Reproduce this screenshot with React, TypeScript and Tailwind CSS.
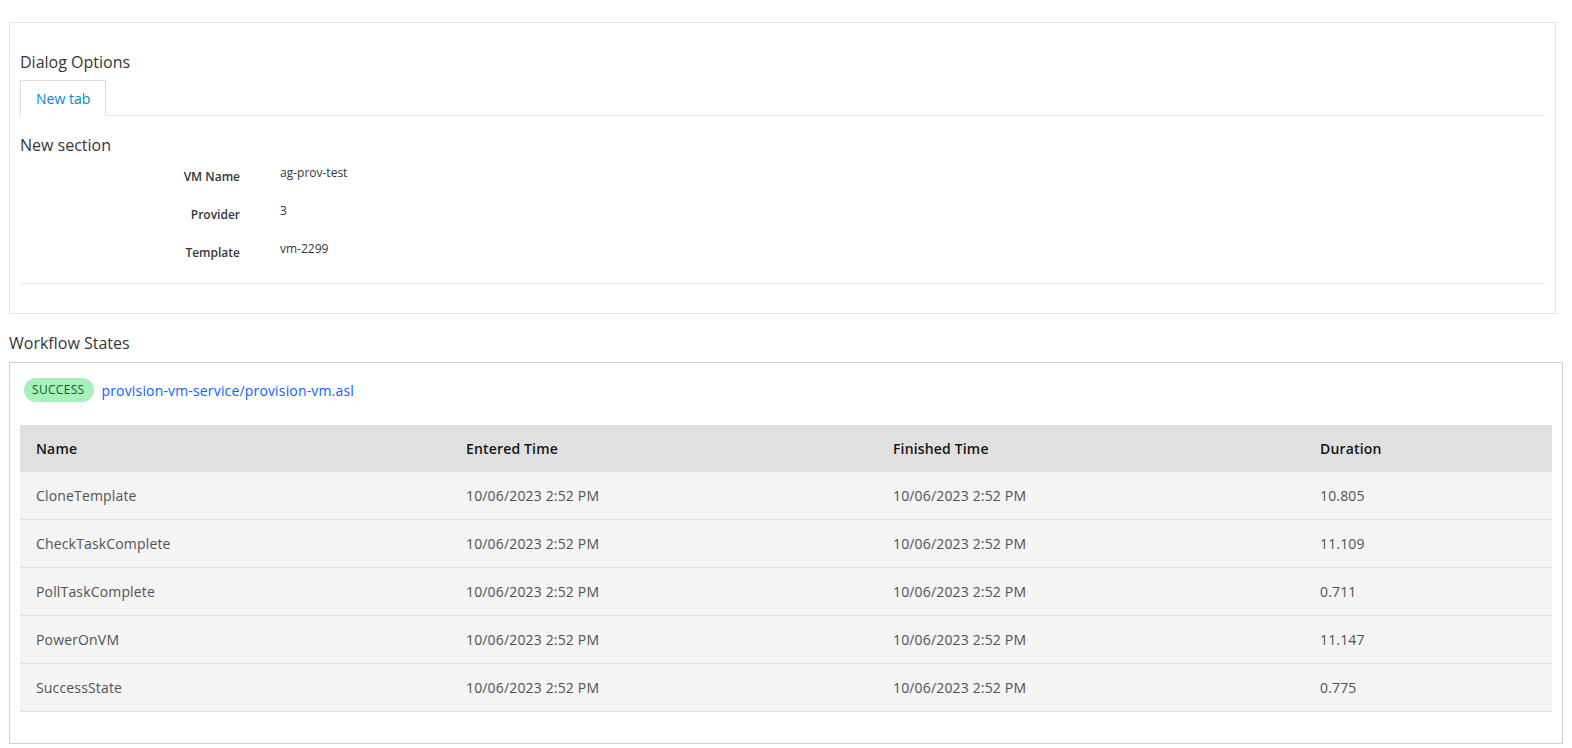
import React from "react";

const rows = [
  ["CloneTemplate", "10/06/2023 2:52 PM", "10/06/2023 2:52 PM", "10.805"],
  ["CheckTaskComplete", "10/06/2023 2:52 PM", "10/06/2023 2:52 PM", "11.109"],
  ["PollTaskComplete", "10/06/2023 2:52 PM", "10/06/2023 2:52 PM", "0.711"],
  ["PowerOnVM", "10/06/2023 2:52 PM", "10/06/2023 2:52 PM", "11.147"],
  ["SuccessState", "10/06/2023 2:52 PM", "10/06/2023 2:52 PM", "0.775"],
];

const fields = [
  ["VM Name", "ag-prov-test"],
  ["Provider", "3"],
  ["Template", "vm-2299"],
];

export default function App() {
  return (
    <div
      className="min-h-[748px] bg-white pt-[22px] pl-[9px] text-[#363636]"
      style={{ fontFamily: '"Open Sans", "Noto Sans", sans-serif' }}
    >
      <div className="w-[1547px] border border-[#e3e3e3] px-[10px] pt-[28px] pb-[29px]">
        <h2 className="text-[16px] leading-[22px] text-[#363636]">Dialog Options</h2>
        <div className="mt-[7px] flex border-b border-[#e6e6e6]">
          <div className="-mb-px flex h-[36px] items-center border border-b-white border-[#dddddd] bg-white px-[15px] text-[14px] text-[#0088ce]">
            New tab
          </div>
        </div>
        <h3 className="mt-[18px] text-[16px] leading-[22px] text-[#363636]">New section</h3>
        <div className="mt-[2px] flex flex-col">
          {fields.map(([label, value]) => (
            <div key={label} className="flex h-[38px] items-start">
              <div className="w-[220px] pt-[10px] text-right text-[12px] leading-[18px] font-semibold text-[#363636]">
                {label}
              </div>
              <div className="ml-[40px] pt-[6px] text-[12px] leading-[18px] text-[#363636]">{value}</div>
            </div>
          ))}
        </div>
        <div className="mt-[11px] border-t border-[#ececec]" />
      </div>

      <h2 className="mt-[18px] text-[16px] leading-[22px] text-[#363636]">Workflow States</h2>

      <div className="mt-[8px] w-[1554px] border border-[#d0d0d0] px-[10px] pt-[15px] pb-[31px]">
        <div className="flex items-center gap-[8px] pl-[4px]">
          <span className="flex h-[24px] items-center rounded-full bg-[#a7f0ba] pl-[8px] pr-[9px] text-[12px] tracking-[0.32px] text-[#0e6027]">
            SUCCESS
          </span>
          <a className="text-[14px] tracking-[0.16px] text-[#0f62fe]" href="#">
            provision-vm-service/provision-vm.asl
          </a>
        </div>
        <div className="mt-[23px] w-[1532px] tracking-[0.16px]">
          <div className="grid h-[47px] grid-cols-[430px_427px_427px_1fr] items-center bg-[#e0e0e0] text-[14px] font-semibold text-[#161616]">
            <div className="pl-[16px]">Name</div>
            <div className="pl-[16px]">Entered Time</div>
            <div className="pl-[16px]">Finished Time</div>
            <div className="pl-[16px]">Duration</div>
          </div>
          {rows.map((r) => (
            <div
              key={r[0]}
              className="grid h-[48px] grid-cols-[430px_427px_427px_1fr] items-center border-b border-[#e0e0e0] bg-[#f4f4f4] text-[14px] text-[#525252]"
            >
              {r.map((c, i) => (
                <div key={i} className="pl-[16px]">
                  {c}
                </div>
              ))}
            </div>
          ))}
        </div>
      </div>
    </div>
  );
}
